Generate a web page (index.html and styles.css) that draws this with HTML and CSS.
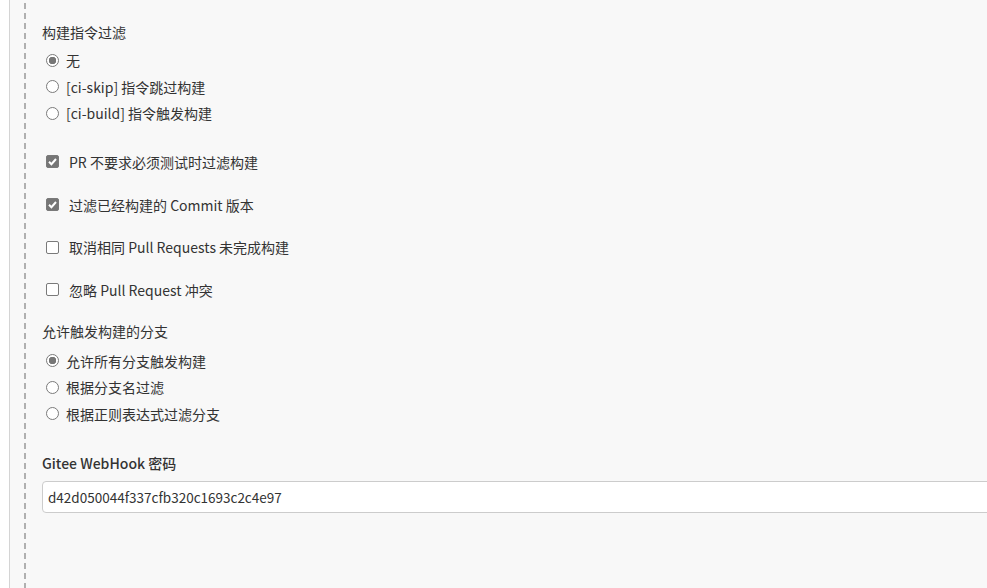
FILE: index.html
```html
<!DOCTYPE html>
<html lang="zh-CN">
<head>
    <meta charset="UTF-8">
    <meta name="viewport" content="width=device-width, initial-scale=1.0">
    <title>Gitee 触发器配置</title>
    <link rel="stylesheet" href="styles.css">
</head>
<body>
    <div class="page">
        <div class="panel">
            <div class="section">
                <div class="field-label">构建指令过滤</div>
                <div class="radio-list">
                    <label class="radio-row"><input type="radio" name="ci" checked> 无</label>
                    <label class="radio-row"><input type="radio" name="ci"> [ci-skip] 指令跳过构建</label>
                    <label class="radio-row"><input type="radio" name="ci"> [ci-build] 指令触发构建</label>
                </div>

                <div class="check-list">
                    <label class="check-row"><input type="checkbox" checked> PR 不要求必须测试时过滤构建</label>
                    <label class="check-row"><input type="checkbox" checked> 过滤已经构建的 Commit 版本</label>
                    <label class="check-row"><input type="checkbox"> 取消相同 Pull Requests 未完成构建</label>
                    <label class="check-row"><input type="checkbox"> 忽略 Pull Request 冲突</label>
                </div>

                <div class="field-label">允许触发构建的分支</div>
                <div class="radio-list branch-list">
                    <label class="radio-row"><input type="radio" name="branch" checked> 允许所有分支触发构建</label>
                    <label class="radio-row"><input type="radio" name="branch"> 根据分支名过滤</label>
                    <label class="radio-row"><input type="radio" name="branch"> 根据正则表达式过滤分支</label>
                </div>

                <div class="field-label secret-label">Gitee WebHook 密码</div>
                <input type="text" class="text-input" value="d42d050044f337cfb320c1693c2c4e97">
            </div>
        </div>
    </div>
</body>
</html>
```

FILE: styles.css
```css
html, body {
    margin: 0;
    padding: 0;
    overflow: hidden;
}

body {
    font-family: "Noto Sans CJK SC", "Noto Sans", sans-serif;
    font-size: 14px;
    color: #333;
    background: #fff;
}

.page {
    display: flex;
    height: 588px;
    padding-left: 9px;
}

.panel {
    flex: 1;
    background: #f8f8f8;
    border-left: 1px solid #d4d4d4;
    padding-left: 14px;
}

.section {
    height: 100%;
    box-sizing: border-box;
    padding: 22px 0 0 18px;
    background-image: repeating-linear-gradient(to bottom, #b0b0b0 0, #b0b0b0 6px, transparent 6px, transparent 10px);
    background-size: 2px 100%;
    background-repeat: no-repeat;
    background-position: 0 3px;
}

.field-label {
    height: 20px;
    line-height: 20px;
}

.radio-list {
    margin-top: 5px;
}

.radio-row,
.check-row {
    display: flex;
    align-items: center;
    padding-left: 4px;
    cursor: pointer;
}

.radio-row {
    height: 26.5px;
}

.check-list {
    margin-top: 14px;
    margin-bottom: 10px;
}

.check-row {
    height: 42.7px;
}

.branch-list {
    margin-top: 6px;
}

.secret-label {
    margin-top: 26px;
    margin-bottom: 8px;
    font-weight: 500;
}

input[type="radio"],
input[type="checkbox"] {
    appearance: none;
    -webkit-appearance: none;
    width: 13px;
    height: 13px;
    margin: 0;
    box-sizing: border-box;
    border: 1px solid #7a7a7a;
    background: #fff;
    flex: none;
}

input[type="radio"] {
    border-radius: 50%;
    margin-right: 7px;
}

input[type="radio"]:checked {
    background: radial-gradient(circle, #767676 0, #767676 3.5px, #fff 4px);
}

input[type="checkbox"] {
    border-radius: 2px;
    margin-right: 10px;
}

input[type="checkbox"]:checked {
    background: #767676 url("data:image/svg+xml,%3Csvg xmlns='http://www.w3.org/2000/svg' viewBox='0 0 13 13'%3E%3Cpath d='M3 6.8l2.4 2.4 4.6-5.2' fill='none' stroke='%23fff' stroke-width='2'/%3E%3C/svg%3E") center / 13px 13px no-repeat;
}

.text-input {
    display: block;
    width: 980px;
    height: 32px;
    box-sizing: border-box;
    padding: 0 5px;
    border: 1px solid #ccc;
    border-radius: 4px;
    background: #fff;
    font-family: inherit;
    font-size: 13.5px;
    color: #333;
    outline: none;
}
```
